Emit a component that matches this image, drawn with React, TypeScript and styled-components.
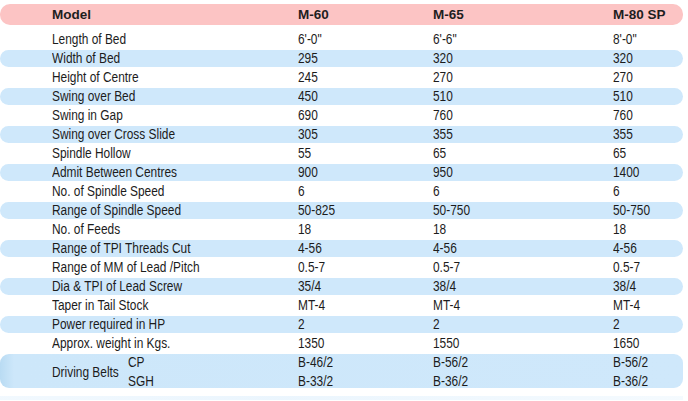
import React from "react";
import styled, { createGlobalStyle } from "styled-components";

const Global = createGlobalStyle`
  html, body { margin: 0; padding: 0; background: #ffffff; }
  body { width: 688px; height: 401px; overflow: hidden; }
`;

const Sheet = styled.div`
  width: 688px;
  height: 401px;
  padding-top: 4px;
  box-sizing: border-box;
  display: flex;
  flex-direction: column;
  gap: 2px;
  font-family: "Liberation Sans", Arial, sans-serif;
  color: #1c1c1c;
`;

const cols = "52px 246px 135px 180px 70px";

const Header = styled.div`
  display: grid;
  grid-template-columns: ${cols};
  align-items: center;
  width: 683px;
  height: 21px;
  margin-bottom: 4px;
  background: #fcc4c4;
  border-radius: 10px;
  font-weight: bold;
  font-size: 13.5px;
  color: #1e1e1e;
`;

const Row = styled.div<{ $shaded: boolean; $tall?: boolean }>`
  display: grid;
  grid-template-columns: ${cols};
  align-items: center;
  width: 683px;
  height: ${(p) => (p.$tall ? "34px" : "17px")};
  background: ${(p) =>
    p.$shaded
      ? p.$tall
        ? "linear-gradient(90deg, #b9dbf3 0px, #cde7fa 14px, #cfe8fb 100%)"
        : "#cfe8fb"
      : "transparent"};
  border-radius: 9px;
  font-size: 14px;
  line-height: 17px;
`;

const Cell = styled.div<{ $col: number }>`
  grid-column: ${(p) => p.$col};
  white-space: nowrap;
`;

const Narrow = styled.span`
  display: inline-block;
  transform: scaleX(0.85);
  transform-origin: 0 50%;
  white-space: nowrap;
`;

const BeltLabel = styled.div`
  grid-column: 2;
  display: grid;
  grid-template-columns: 76px auto;
  align-items: center;
`;

const Stack = styled.div<{ $col?: number }>`
  ${(p) => (p.$col ? `grid-column: ${p.$col};` : "")}
  display: flex;
  flex-direction: column;
  gap: 2px;
  white-space: nowrap;
`;

const Fade = styled.div`
  width: 683px;
  height: 4px;
  margin-top: 6px;
  background: linear-gradient(90deg, #eef7fe 0px, #e6f3fd 40%, #f2f9fe 100%);
  opacity: 0.8;
`;

const rows: [string, string, string, string][] = [
  ["Length of Bed", "6'-0\"", "6'-6\"", "8'-0\""],
  ["Width of Bed", "295", "320", "320"],
  ["Height of Centre", "245", "270", "270"],
  ["Swing over Bed", "450", "510", "510"],
  ["Swing in Gap", "690", "760", "760"],
  ["Swing over Cross Slide", "305", "355", "355"],
  ["Spindle Hollow", "55", "65", "65"],
  ["Admit Between Centres", "900", "950", "1400"],
  ["No. of Spindle Speed", "6", "6", "6"],
  ["Range of Spindle Speed", "50-825", "50-750", "50-750"],
  ["No. of Feeds", "18", "18", "18"],
  ["Range of TPI Threads Cut", "4-56", "4-56", "4-56"],
  ["Range of MM of Lead /Pitch", "0.5-7", "0.5-7", "0.5-7"],
  ["Dia & TPI of Lead Screw", "35/4", "38/4", "38/4"],
  ["Taper in Tail Stock", "MT-4", "MT-4", "MT-4"],
  ["Power required in HP", "2", "2", "2"],
  ["Approx. weight in Kgs.", "1350", "1550", "1650"],
];

export default function App() {
  return (
    <>
      <Global />
      <Sheet>
        <Header>
          <Cell $col={2}>Model</Cell>
          <Cell $col={3}>M-60</Cell>
          <Cell $col={4}>M-65</Cell>
          <Cell $col={5}>M-80 SP</Cell>
        </Header>
        {rows.map((r, i) => (
          <Row key={r[0]} $shaded={i % 2 === 1}>
            <Cell $col={2}><Narrow>{r[0]}</Narrow></Cell>
            <Cell $col={3}><Narrow>{r[1]}</Narrow></Cell>
            <Cell $col={4}><Narrow>{r[2]}</Narrow></Cell>
            <Cell $col={5}><Narrow>{r[3]}</Narrow></Cell>
          </Row>
        ))}
        <Row $shaded $tall>
          <BeltLabel>
            <Narrow>Driving Belts</Narrow>
            <Stack>
              <Narrow>CP</Narrow>
              <Narrow>SGH</Narrow>
            </Stack>
          </BeltLabel>
          <Stack $col={3}>
            <Narrow>B-46/2</Narrow>
            <Narrow>B-33/2</Narrow>
          </Stack>
          <Stack $col={4}>
            <Narrow>B-56/2</Narrow>
            <Narrow>B-36/2</Narrow>
          </Stack>
          <Stack $col={5}>
            <Narrow>B-56/2</Narrow>
            <Narrow>B-36/2</Narrow>
          </Stack>
        </Row>
        <Fade />
      </Sheet>
    </>
  );
}
